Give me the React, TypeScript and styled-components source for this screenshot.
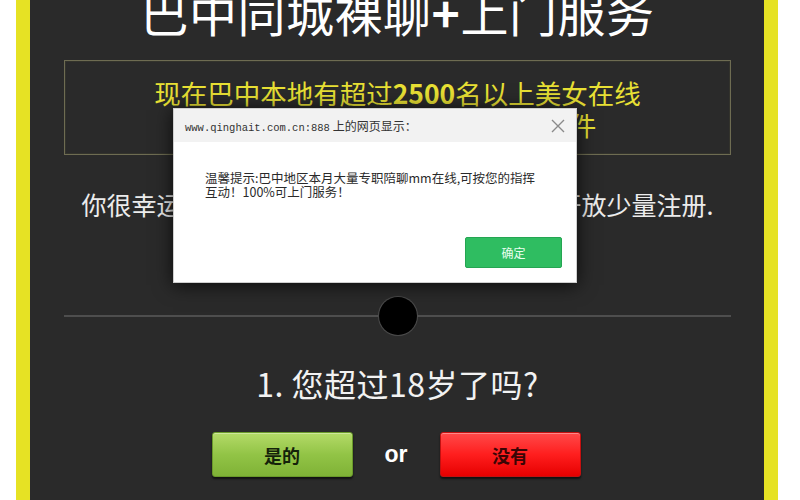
import React from "react";
import styled, { createGlobalStyle } from "styled-components";

const Global = createGlobalStyle`
  html, body { margin: 0; padding: 0; background: #ffffff; }
  body { font-family: "Noto Sans CJK SC", "Noto Sans", sans-serif; }
  * { box-sizing: border-box; }
`;

const Panel = styled.main`
  width: 762px;
  height: 500px;
  margin-left: 16px;
  border-left: 14px solid #e6e224;
  border-right: 14px solid #e6e224;
  background: #2a2a2a;
  overflow: hidden;
  display: flex;
  flex-direction: column;
  align-items: center;
  padding: 0 33px 0 34px;
`;

const Title = styled.h1`
  margin: -13px 0 0;
  font-size: 48px;
  line-height: 48px;
  font-weight: 400;
  color: #ffffff;
  letter-spacing: 0.5px;
  white-space: nowrap;
  font-family: "Noto Sans CJK SC", sans-serif;
`;

const Plus = styled.span`
  font-weight: 700;
`;

const Notice = styled.section`
  margin-top: 25px;
  align-self: stretch;
  border: 1px solid #6e6c52;
  box-shadow: inset 0 0 0 1px #33332c;
  padding: 16px 0 13px;
  text-align: center;
  color: #e8e034;
  font-size: 26.5px;
  line-height: 32px;
  white-space: nowrap;
  font-family: "Noto Sans CJK SC", sans-serif;
`;

const Strong = styled.span`
  font-weight: 700;
`;

const Intro = styled.p`
  margin: 32px 0 0;
  font-size: 25px;
  line-height: 34px;
  color: #ececec;
  white-space: nowrap;
  font-family: "Noto Sans CJK SC", sans-serif;
`;

const Separator = styled.div`
  margin-top: 76px;
  align-self: stretch;
  display: flex;
  align-items: center;
  height: 38px;
`;

const Rule = styled.span`
  flex: 1;
  height: 2px;
  background: #4e4e4e;
`;

const Dot = styled.span`
  width: 38px;
  height: 38px;
  border-radius: 50%;
  background: #000;
  box-shadow: 0 0 0 1px #4a4a4a, 0 0 3px rgba(255, 255, 255, 0.08);
`;

const Question = styled.h2`
  margin: 28px 0 0;
  font-size: 32px;
  line-height: 40px;
  font-weight: 400;
  letter-spacing: 0.5px;
  color: #f2f2f2;
  white-space: nowrap;
  font-family: "Noto Sans CJK SC", sans-serif;
`;

const Choices = styled.div`
  margin-top: 29px;
  display: flex;
  align-items: center;
  gap: 32px;
  padding-right: 3px;
`;

const Choice = styled.button<{ $tone: "yes" | "no" }>`
  width: 141px;
  height: 45px;
  border-radius: 3px;
  font-family: "Noto Sans CJK SC", serif;
  font-size: 18px;
  font-weight: 700;
  cursor: pointer;
  border: 1px solid ${(p) => (p.$tone === "yes" ? "#6a9a2a" : "#c41010")};
  color: ${(p) => (p.$tone === "yes" ? "#14220a" : "#3a0505")};
  background: ${(p) =>
    p.$tone === "yes"
      ? "linear-gradient(#b4da68, #92c446 50%, #7fb236)"
      : "linear-gradient(#ff4a4a, #ff1e1e 50%, #e60000)"};
  box-shadow: 0 2px 2px rgba(0, 0, 0, 0.6), inset 0 1px 0 rgba(255, 255, 255, 0.35);
`;

const Or = styled.span`
  font-family: "Liberation Sans", Arial, sans-serif;
  font-weight: 700;
  font-size: 23px;
  color: #ffffff;
`;

const Dialog = styled.div`
  position: absolute;
  left: 173px;
  top: 108px;
  width: 404px;
  height: 175px;
  background: #ffffff;
  border: 1px solid #cfcfcf;
  box-shadow: 0 2px 18px rgba(0, 0, 0, 0.75);
  display: flex;
  flex-direction: column;
`;

const DialogHead = styled.header`
  height: 33px;
  background: #f2f2f2;
  display: flex;
  align-items: center;
  justify-content: space-between;
  padding: 0 10px 0 11px;
  font-size: 12px;
  color: #333;
  font-family: "Noto Sans CJK SC", sans-serif;
`;

const Url = styled.span`
  font-family: "Liberation Mono", "DejaVu Sans Mono", monospace;
  font-size: 10.5px;
  color: #333;
`;

const Close = styled.span`
  display: flex;
  width: 16px;
  height: 16px;
`;

const DialogBody = styled.div`
  flex: 1;
  padding: 29px 36px 0 31px;
  font-size: 12.5px;
  line-height: 14px;
  color: #2a2a2a;
  font-family: "Noto Sans CJK SC", sans-serif;
`;

const DialogFoot = styled.footer`
  display: flex;
  justify-content: flex-end;
  padding: 0 14px 14px;
`;

const Confirm = styled.button`
  width: 97px;
  height: 31px;
  border: 1px solid #25a552;
  border-radius: 2px;
  background: #2fbd61;
  color: #eafff0;
  font-size: 12px;
  font-family: "Noto Sans CJK SC", sans-serif;
  cursor: pointer;
`;

export default function App() {
  return (
    <>
      <Global />
      <Panel>
        <Title>
          巴中同城裸聊<Plus>+</Plus>上门服务
        </Title>
        <Notice>
          <div>
            现在巴中本地有超过<Strong>2500</Strong>名以上美女在线
          </div>
          <div>寻找约会对象但您需满足以下条件</div>
        </Notice>
        <Intro>你很幸运，我们正在为巴中地区的会员免费开放少量注册.</Intro>
        <Separator>
          <Rule />
          <Dot />
          <Rule />
        </Separator>
        <Question>1. 您超过18岁了吗?</Question>
        <Choices>
          <Choice $tone="yes">是的</Choice>
          <Or>or</Or>
          <Choice $tone="no">没有</Choice>
        </Choices>
      </Panel>
      <Dialog>
        <DialogHead>
          <span>
            <Url>www.qinghait.com.cn:888</Url> 上的网页显示：
          </span>
          <Close>
            <svg width="16" height="16" viewBox="0 0 16 16">
              <path d="M2 2 L14 14 M14 2 L2 14" stroke="#8a8a8a" strokeWidth="1.4" fill="none" />
            </svg>
          </Close>
        </DialogHead>
        <DialogBody>
          温馨提示:巴中地区本月大量专职陪聊mm在线,可按您的指挥互动！100%可上门服务！
        </DialogBody>
        <DialogFoot>
          <Confirm>确定</Confirm>
        </DialogFoot>
      </Dialog>
    </>
  );
}
